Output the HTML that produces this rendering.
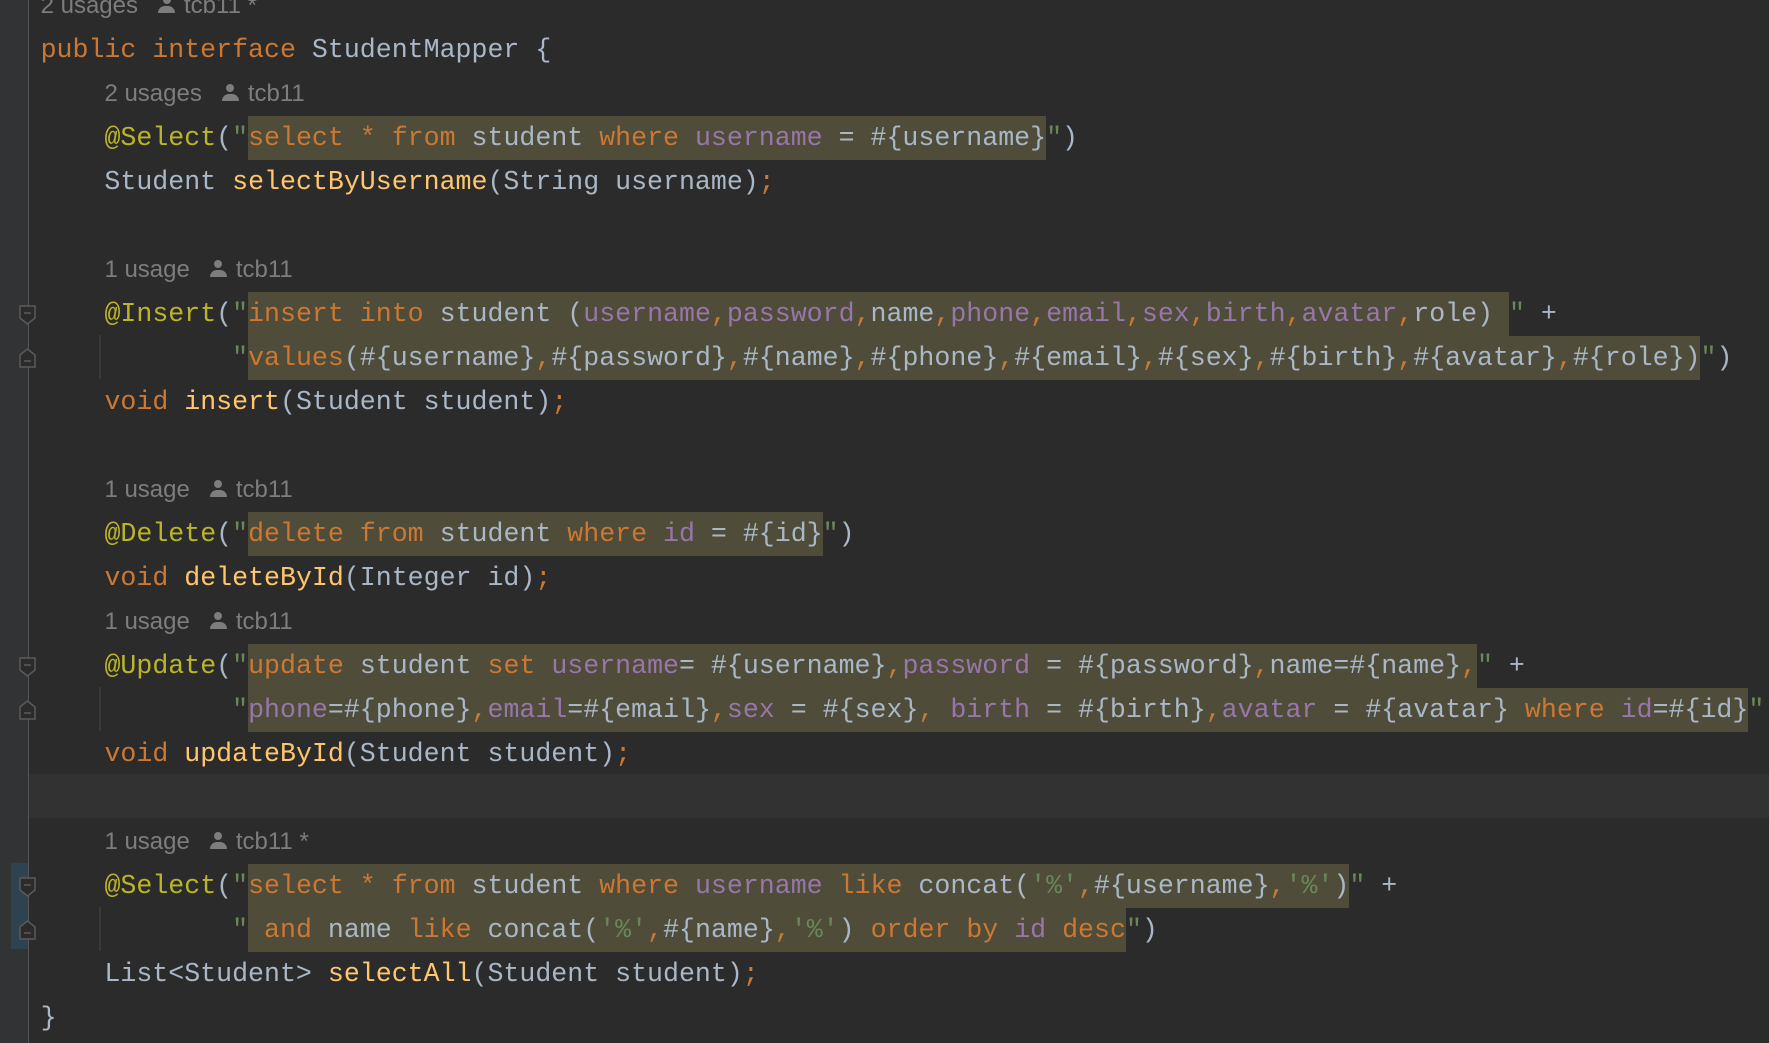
<!DOCTYPE html>
<html><head><meta charset="utf-8"><style>
html,body{margin:0;padding:0;background:#2b2b2b;width:1769px;height:1043px;overflow:hidden}
#g{position:absolute;left:0;top:0;width:28px;height:1043px;background:#313335}
#gl{position:absolute;left:28px;top:0;width:1px;height:1043px;background:#555}
#cur{position:absolute;left:29px;top:774px;width:1740px;height:44px;background:#323232}
#code{position:absolute;left:40.6px;top:-16.5px;font-family:"Liberation Mono",monospace;font-size:26.6px;color:#a9b7c6}
.l{height:44px;line-height:44px;white-space:pre}
.k{color:#cc7832}.s{color:#6a8759}.a{color:#bbb529}.m{color:#ffc66d}.p{color:#9876aa}
.h{display:inline-block;height:44px;background:#4f4c3a;vertical-align:top}
.in{font-family:"Liberation Sans",sans-serif;font-size:24px;color:#7d7d7d;white-space:pre}
.pi{display:inline-block;width:17px;height:18px;position:relative;vertical-align:-1px;margin:0 9px 0 20px}
.pi:before{content:"";position:absolute;left:4.5px;top:0;width:8px;height:8px;border-radius:50%;background:#7d7d7d}
.pi:after{content:"";position:absolute;left:0;top:10px;width:17px;height:7px;border-radius:8px 8px 0 0;background:#7d7d7d}
.guide{position:absolute;left:99px;width:2px;height:44px;background:#393939}
.fold{position:absolute;left:18px}
</style></head><body>
<div id="g"></div><div id="gl"></div>
<div style="position:absolute;left:11px;top:863px;width:17px;height:86px;background:#2f4250"></div>
<div id="cur"></div>
<div class="guide" style="top:335px"></div>
<div class="guide" style="top:687px"></div>
<div class="guide" style="top:907px"></div>
<svg class="fold" style="top:304px" width="20" height="90" viewBox="0 0 18 90"><g fill="#2b2b2b" stroke="#5a5a5a" stroke-width="1.5"><path d="M1 2H16V14L8.5 20L1 14Z"/><path d="M5 9H12"/><path d="M1 51L8.5 45L16 51V63H1Z"/><path d="M5 57H12"/></g></svg>
<svg class="fold" style="top:656px" width="20" height="90" viewBox="0 0 18 90"><g fill="#2b2b2b" stroke="#5a5a5a" stroke-width="1.5"><path d="M1 2H16V14L8.5 20L1 14Z"/><path d="M5 9H12"/><path d="M1 51L8.5 45L16 51V63H1Z"/><path d="M5 57H12"/></g></svg>
<svg class="fold" style="top:876px" width="20" height="90" viewBox="0 0 18 90"><g fill="#2b2b2b" stroke="#5a5a5a" stroke-width="1.5"><path d="M1 2H16V14L8.5 20L1 14Z"/><path d="M5 9H12"/><path d="M1 51L8.5 45L16 51V63H1Z"/><path d="M5 57H12"/></g></svg>
<div id="code"><div class="l"><span class="in">2 usages<span class="pi"></span>tcb11 *</span></div><div class="l"><span class="k">public interface </span>StudentMapper {</div><div class="l">    <span class="in">2 usages<span class="pi"></span>tcb11</span></div><div class="l">    <span class="a">@Select</span>(<span class="s">"</span><span class="h"><span class="k">select * from </span>student <span class="k">where </span><span class="p">username</span> = #{username}</span><span class="s">"</span>)</div><div class="l">    Student <span class="m">selectByUsername</span>(String username)<span class="k">;</span></div><div class="l"> </div><div class="l">    <span class="in">1 usage<span class="pi"></span>tcb11</span></div><div class="l">    <span class="a">@Insert</span>(<span class="s">"</span><span class="h"><span class="k">insert into </span>student (<span class="p">username</span><span class="k">,</span><span class="p">password</span><span class="k">,</span>name<span class="k">,</span><span class="p">phone</span><span class="k">,</span><span class="p">email</span><span class="k">,</span><span class="p">sex</span><span class="k">,</span><span class="p">birth</span><span class="k">,</span><span class="p">avatar</span><span class="k">,</span>role) </span><span class="s">"</span> +</div><div class="l">            <span class="s">"</span><span class="h"><span class="k">values</span>(#{username}<span class="k">,</span>#{password}<span class="k">,</span>#{name}<span class="k">,</span>#{phone}<span class="k">,</span>#{email}<span class="k">,</span>#{sex}<span class="k">,</span>#{birth}<span class="k">,</span>#{avatar}<span class="k">,</span>#{role})</span><span class="s">"</span>)</div><div class="l">    <span class="k">void </span><span class="m">insert</span>(Student student)<span class="k">;</span></div><div class="l"> </div><div class="l">    <span class="in">1 usage<span class="pi"></span>tcb11</span></div><div class="l">    <span class="a">@Delete</span>(<span class="s">"</span><span class="h"><span class="k">delete from </span>student <span class="k">where </span><span class="p">id</span> = #{id}</span><span class="s">"</span>)</div><div class="l">    <span class="k">void </span><span class="m">deleteById</span>(Integer id)<span class="k">;</span></div><div class="l">    <span class="in">1 usage<span class="pi"></span>tcb11</span></div><div class="l">    <span class="a">@Update</span>(<span class="s">"</span><span class="h"><span class="k">update </span>student <span class="k">set </span><span class="p">username</span>= #{username}<span class="k">,</span><span class="p">password</span> = #{password}<span class="k">,</span>name=#{name}<span class="k">,</span></span><span class="s">"</span> +</div><div class="l">            <span class="s">"</span><span class="h"><span class="p">phone</span>=#{phone}<span class="k">,</span><span class="p">email</span>=#{email}<span class="k">,</span><span class="p">sex</span> = #{sex}<span class="k">, </span><span class="p">birth</span> = #{birth}<span class="k">,</span><span class="p">avatar</span> = #{avatar} <span class="k">where </span><span class="p">id</span>=#{id}</span><span class="s">"</span>)</div><div class="l">    <span class="k">void </span><span class="m">updateById</span>(Student student)<span class="k">;</span></div><div class="l"> </div><div class="l">    <span class="in">1 usage<span class="pi"></span>tcb11 *</span></div><div class="l">    <span class="a">@Select</span>(<span class="s">"</span><span class="h"><span class="k">select * from </span>student <span class="k">where </span><span class="p">username</span> <span class="k">like </span>concat(<span class="s">'%'</span><span class="k">,</span>#{username}<span class="k">,</span><span class="s">'%'</span>)</span><span class="s">"</span> +</div><div class="l">            <span class="s">"</span><span class="h"> <span class="k">and </span>name <span class="k">like </span>concat(<span class="s">'%'</span><span class="k">,</span>#{name}<span class="k">,</span><span class="s">'%'</span>) <span class="k">order by </span><span class="p">id</span> <span class="k">desc</span></span><span class="s">"</span>)</div><div class="l">    List&lt;Student&gt; <span class="m">selectAll</span>(Student student)<span class="k">;</span></div><div class="l">}</div></div>
</body></html>
